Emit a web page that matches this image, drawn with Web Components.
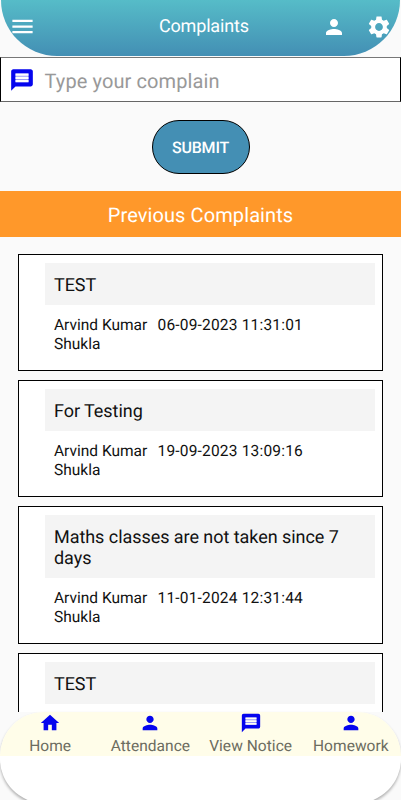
<!DOCTYPE html>
<html lang="en">
<head>
<meta charset="utf-8">
<title>Complaints</title>
<style>
html,body{margin:0;height:100%;overflow:hidden;background:#fafafa;font-family:Roboto,"Liberation Sans",sans-serif;text-rendering:geometricPrecision}
</style>
</head>
<body>
<complaints-page></complaints-page>
<script>
const ICONS = {
  menu: '<path d="M3 18h18v-2H3v2zm0-5h18v-2H3v2zm0-7v2h18V6H3z"/>',
  person: '<path d="M12 12c2.21 0 4-1.79 4-4s-1.79-4-4-4-4 1.79-4 4 1.79 4 4 4zm0 2c-2.67 0-8 1.34-8 4v2h16v-2c0-2.66-5.33-4-8-4z"/>',
  gear: '<path d="M19.14 12.94c.04-.3.06-.61.06-.94 0-.32-.02-.64-.07-.94l2.03-1.58c.18-.14.23-.41.12-.61l-1.92-3.32c-.12-.22-.37-.29-.59-.22l-2.39.96c-.5-.38-1.03-.7-1.62-.94l-.36-2.54c-.04-.24-.24-.41-.48-.41h-3.84c-.24 0-.43.17-.47.41l-.36 2.54c-.59.24-1.13.57-1.62.94l-2.39-.96c-.22-.08-.47 0-.59.22L2.74 8.870c-.12.21-.08.47.12.61l2.03 1.58c-.05.3-.09.63-.09.94s.02.64.07.94l-2.03 1.58c-.18.14-.23.41-.12.61l1.92 3.32c.12.22.37.29.59.22l2.39-.96c.5.38 1.03.7 1.62.94l.36 2.54c.05.24.24.41.48.41h3.84c.24 0 .44-.17.47-.41l.36-2.54c.59-.24 1.13-.56 1.62-.94l2.39.96c.22.08.47 0 .59-.22l1.92-3.32c.12-.22.07-.47-.12-.61l-2.01-1.58zM12 15.6c-1.98 0-3.6-1.62-3.6-3.6s1.62-3.6 3.6-3.6 3.6 1.62 3.6 3.6-1.62 3.6-3.6 3.6z"/>',
  message: '<path d="M20 2H4c-1.1 0-1.99.9-1.99 2L2 22l4-4h14c1.1 0 2-.9 2-2V4c0-1.100-.9-2-2-2zm-2 12H6v-2h12v2zm0-3H6V9h12v2zm0-3H6V6h12v2z"/><path fill="#fff" fill-opacity=".6" d="M6 6h12v8H6z"/>',
  home: '<path d="M10 20v-6h4v6h5v-8h3L12 3 2 12h3v8z"/>'
};
function define(name, html, fill) {
  customElements.define(name, class extends HTMLElement {
    connectedCallback() {
      if (this.shadowRoot) return;
      this.attachShadow({mode: 'open'}).innerHTML = html;
      if (fill) fill(this.shadowRoot, this);
    }
  });
}
define('app-icon', `<style>:host{display:block;flex:none;width:24px;height:24px}svg{display:block;width:100%;height:100%;fill:currentColor}</style><svg viewBox="0 0 24 24"></svg>`,
  (root, el) => { root.querySelector('svg').innerHTML = ICONS[el.getAttribute('name')]; });

define('app-header', `<style>
:host{display:flex;align-items:center;height:56px;margin:0 1px;box-sizing:border-box;padding:0 0 3px 8px;color:#fff;background:linear-gradient(#56bcc8,#438fb4);border-radius:0 0 60px 60px / 0 0 60px 60px;overflow:hidden}
.title{flex:1;min-width:0;font-size:18px;line-height:24px;letter-spacing:-.18px;padding:1px 0 0 123px;white-space:nowrap}
.menu{width:27px;height:27px}
.person{margin-right:20px}
.gear{width:26px;height:26px;margin-right:8px}
</style><app-icon class="menu" name="menu"></app-icon><div class="title"><slot></slot></div><app-icon class="person" name="person"></app-icon><app-icon class="gear" name="gear"></app-icon>`);

define('complaint-field', `<style>
:host{display:flex;align-items:center;height:45px;box-sizing:border-box;margin-top:1px;border:1px solid #000;border-top-color:#777;border-bottom-color:#666;background:#fff;color:#999;font-size:20px;padding:0 0 0 8px}
app-icon{width:26px;height:26px;color:#0505ee;margin-right:9.500px}
span{letter-spacing:.1px;padding-top:2px}
</style><app-icon name="message"></app-icon><span><slot></slot></span>`);

define('submit-button', `<style>
:host{display:flex;align-items:center;justify-content:center;box-sizing:border-box;width:98px;height:54px;margin:18px auto 17px;border:1px solid #000;border-radius:27px;background:#448fb4;color:#fff;font-size:16px;font-weight:500;letter-spacing:-.2px}
</style><slot></slot>`);

define('section-heading', `<style>
:host{display:flex;align-items:center;justify-content:center;height:46px;padding-top:1px;box-sizing:border-box;background:#ff982a;color:#fff;font-size:20px;letter-spacing:.1px}
</style><slot></slot>`);

define('complaint-card', `<style>
:host{display:block;box-sizing:border-box;width:365px;margin:0 0 9px 18px;border:1px solid #000;background:#fff;padding:8px 7px 17px 26px;color:#111}
.subject{background:#f4f4f4;padding:12px 9px 9px;font-size:18px;line-height:21px;letter-spacing:-.05px}
.meta{display:flex;padding:11px 9px 0;font-size:15.500px;line-height:18.500px;height:37px}
.who{width:103.500px}
.when{letter-spacing:.19px}
</style><div class="subject"><slot></slot></div><div class="meta"><div class="who"><slot name="who"></slot></div><div class="when"><slot name="when"></slot></div></div>`);

define('nav-item', `<style>
:host{display:flex;flex-direction:column;align-items:center;flex:1;min-width:0;color:#6c6c60;font-size:15.500px;line-height:20px;letter-spacing:.05px;white-space:nowrap}
app-icon{width:22px;height:22px;color:#0505ee;margin-bottom:2px}
</style><app-icon></app-icon><span><slot></slot></span>`,
  (root, el) => {
    const icon = document.createElement('app-icon');
    icon.setAttribute('name', el.getAttribute('icon'));
    root.querySelector('app-icon').replaceWith(icon);
  });

define('bottom-nav', `<style>
:host{display:block;position:absolute;left:0;right:0;top:712px;height:91px;border-radius:44px;overflow:hidden;background:#fff;box-shadow:0 2px 3px rgba(0,0,0,.3)}
nav{display:flex;height:44px;box-sizing:border-box;background:#fffde9}
</style><nav><slot></slot></nav>`);

define('complaints-page', `<style>
:host{display:block;position:relative;width:401px;height:800px;overflow:hidden;background:#fafafa}
.list{padding-top:17px;height:458px;box-sizing:border-box}
.viewport{height:475px;overflow:hidden}
</style>
<app-header>Complaints</app-header>
<complaint-field>Type your complain</complaint-field>
<submit-button>SUBMIT</submit-button>
<section-heading>Previous Complaints</section-heading>
<div class="viewport"><div class="list">
<complaint-card>TEST<span slot="who">Arvind Kumar Shukla</span><span slot="when">06-09-2023 11:31:01</span></complaint-card>
<complaint-card>For Testing<span slot="who">Arvind Kumar Shukla</span><span slot="when">19-09-2023 13:09:16</span></complaint-card>
<complaint-card>Maths classes are not taken since 7 days<span slot="who">Arvind Kumar Shukla</span><span slot="when">11-01-2024 12:31:44</span></complaint-card>
<complaint-card>TEST</complaint-card>
</div></div>
<bottom-nav>
<nav-item icon="home">Home</nav-item><nav-item icon="person">Attendance</nav-item><nav-item icon="message">View Notice</nav-item><nav-item icon="person">Homework</nav-item>
</bottom-nav>`);
</script>
</body>
</html>
